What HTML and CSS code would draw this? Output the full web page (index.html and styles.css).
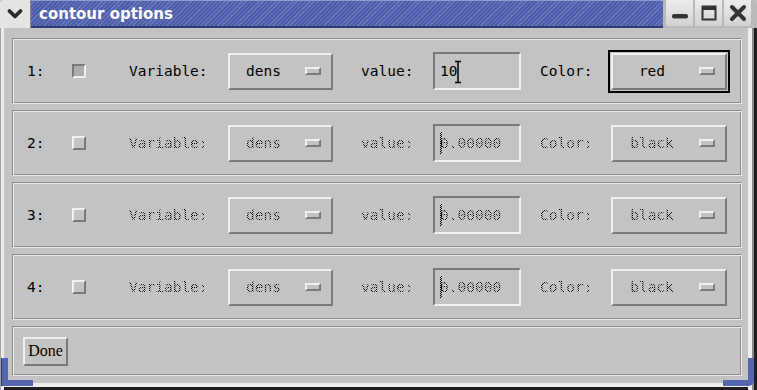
FILE: index.html
```html
<!DOCTYPE html>
<html lang="en">
<head>
    <meta charset="UTF-8">
    <title>contour options</title>
    <link rel="stylesheet" href="styles.css">
</head>
<body>
    <div class="window">
        <div class="titlebar">
            <div class="menu-btn">
                <svg width="16" height="12" viewBox="0 0 16 12"><polyline points="2.5,3 8,8.5 13.5,3" fill="none" stroke="#2b2b2b" stroke-width="3.8" stroke-linecap="round" stroke-linejoin="round"/></svg>
            </div>
            <div class="title">contour options</div>
            <div class="win-btns">
                <div class="wbtn">
                    <svg width="18" height="18" viewBox="0 0 18 18"><rect x="1" y="10" width="16" height="4.5" rx="2" fill="#333"/></svg>
                </div>
                <div class="wbtn">
                    <svg width="18" height="18" viewBox="0 0 18 18"><rect x="2.5" y="2.5" width="13" height="13" fill="none" stroke="#333" stroke-width="2"/><rect x="2" y="2" width="14" height="4" fill="#333"/></svg>
                </div>
                <div class="wbtn">
                    <svg width="18" height="18" viewBox="0 0 18 18"><path d="M3 3 L15 15 M15 3 L3 15" stroke="#333" stroke-width="4" stroke-linecap="round"/></svg>
                </div>
            </div>
        </div>

        <div class="client">
            <div class="frame row">
                <span>1:</span>
                <span><span class="check on"></span></span>
                <span>Variable:</span>
                <span class="ring"><span class="mbtn var"><span class="mtext">dens</span><span class="ind"></span></span></span>
                <span>value:</span>
                <span class="entry">10<svg class="ibeam" width="8" height="24" viewBox="0 0 8 24"><path d="M1 1.5 H7 M4 1.5 V22.5 M1 22.5 H7" stroke="#000" stroke-width="1.5" fill="none"/></svg></span>
                <span>Color:</span>
                <span class="ring focus"><span class="mbtn color"><span class="mtext">red</span><span class="ind"></span></span></span>
            </div>

            <div class="frame row">
                <span>2:</span>
                <span><span class="check"></span></span>
                <span class="dis">Variable:</span>
                <span class="ring"><span class="mbtn var"><span class="mtext dis">dens</span><span class="ind"></span></span></span>
                <span class="dis">value:</span>
                <span class="entry"><span class="icursor"></span><span class="dis">0.00000</span></span>
                <span class="dis">Color:</span>
                <span class="ring"><span class="mbtn color"><span class="mtext dis">black</span><span class="ind"></span></span></span>
            </div>

            <div class="frame row">
                <span>3:</span>
                <span><span class="check"></span></span>
                <span class="dis">Variable:</span>
                <span class="ring"><span class="mbtn var"><span class="mtext dis">dens</span><span class="ind"></span></span></span>
                <span class="dis">value:</span>
                <span class="entry"><span class="icursor"></span><span class="dis">0.00000</span></span>
                <span class="dis">Color:</span>
                <span class="ring"><span class="mbtn color"><span class="mtext dis">black</span><span class="ind"></span></span></span>
            </div>

            <div class="frame row">
                <span>4:</span>
                <span><span class="check"></span></span>
                <span class="dis">Variable:</span>
                <span class="ring"><span class="mbtn var"><span class="mtext dis">dens</span><span class="ind"></span></span></span>
                <span class="dis">value:</span>
                <span class="entry"><span class="icursor"></span><span class="dis">0.00000</span></span>
                <span class="dis">Color:</span>
                <span class="ring"><span class="mbtn color"><span class="mtext dis">black</span><span class="ind"></span></span></span>
            </div>

            <div class="frame done-row">
                <button class="done">Done</button>
            </div>
        </div>

        <div class="corner bl"></div>
        <div class="corner br"></div>
    </div>
</body>
</html>
```

FILE: styles.css
```css
body {
    margin: 0;
    padding: 0;
    background-color: #ffffff;
    font-family: "DejaVu Sans Mono", "Liberation Mono", monospace;
    font-size: 14.5px;
    color: #000;
}

.window {
    width: 757px;
    height: 390px;
    position: relative;
    display: flex;
    flex-direction: column;
    background-color: #c3c3c3;
    overflow: hidden;
}

/* title bar */
.titlebar {
    height: 28px;
    flex: none;
    display: flex;
}

.menu-btn {
    width: 30px;
    background-color: #e4e4e4;
    border-right: 1px solid #8c8c8c;
    border-top-left-radius: 4px;
    display: flex;
    align-items: center;
    justify-content: center;
}

.title {
    flex: 1;
    display: flex;
    align-items: center;
    padding-left: 8px;
    background: repeating-linear-gradient(135deg, #4e5ea8 0 2px, #6878bf 2px 3px);
    border-top: 1px solid #8e9ad2;
    border-bottom: 2px solid #2e3a7a;
    color: #ffffff;
    font-family: "DejaVu Sans", sans-serif;
    font-weight: bold;
    font-size: 15px;
}

.win-btns {
    width: 94px;
    box-sizing: border-box;
    display: flex;
    gap: 2px;
    padding: 0 6px 2px 3px;
    background-color: #b9b9b9;
    border-top-right-radius: 6px;
}

.wbtn {
    width: 27px;
    display: flex;
    align-items: center;
    justify-content: center;
    background: linear-gradient(#ececec, #d2d2d2);
}

/* client area */
.client {
    flex: 1;
    display: flex;
    flex-direction: column;
    gap: 6px;
    padding: 10px 15px 0 12px;
    box-shadow:
        inset 1px 0 0 #a0a0a0,
        inset 4px 0 0 #ececec,
        inset -3px 0 0 #1e1e1e,
        inset -5px 0 0 #8a8a8a,
        inset -9px 0 0 #eeeeee,
        inset 0 -3px 0 #1e1e1e,
        inset 0 -7px 0 #eeeeee;
}

.frame {
    box-sizing: border-box;
    border: 1px solid;
    border-color: #8a8a8a #ebebeb #ebebeb #8a8a8a;
    box-shadow: inset 1px 1px 0 #ebebeb, inset -1px -1px 0 #8a8a8a;
}

.row {
    height: 66px;
    display: grid;
    grid-template-columns: 45px 57px 99px 133px 72px 107px 68px 122px;
    align-items: center;
    padding-left: 14px;
}

.done-row {
    height: 50px;
    display: flex;
    align-items: center;
    padding-left: 10px;
}

/* disabled text is stippled like Tk does it */
.dis {
    background: repeating-conic-gradient(#000 0 25%, transparent 0 50%) 0 0 / 2px 2px;
    -webkit-background-clip: text;
    background-clip: text;
    color: transparent;
}

.check {
    display: block;
    width: 14px;
    height: 14px;
    box-sizing: border-box;
    border: 2px solid;
    border-color: #f0f0f0 #7a7a7a #7a7a7a #f0f0f0;
}

.check.on {
    border-color: #7a7a7a #f0f0f0 #f0f0f0 #7a7a7a;
    background-color: #acacac;
}

.ring {
    display: inline-block;
    border: 2px solid transparent;
    padding: 1px;
    justify-self: start;
    margin-left: -3px;
}

.ring.focus {
    border-color: #000;
}

.mbtn {
    height: 37px;
    box-sizing: border-box;
    display: flex;
    align-items: center;
    padding-right: 10px;
    border: 2px solid;
    border-color: #f0f0f0 #7a7a7a #7a7a7a #f0f0f0;
}

.mbtn.var {
    width: 105px;
}

.mbtn.color {
    width: 116px;
}

.ring.focus,
.row .ring:last-child {
    margin-left: 0;
}

.mtext {
    flex: 1;
    text-align: center;
    padding-right: 8px;
}

.ind {
    width: 16px;
    height: 8px;
    box-sizing: border-box;
    border: 2px solid;
    border-color: #f0f0f0 #7a7a7a #7a7a7a #f0f0f0;
}

.entry {
    position: relative;
    width: 88px;
    height: 38px;
    box-sizing: border-box;
    display: flex;
    align-items: center;
    padding-left: 5px;
    border: 2px solid;
    border-color: #7a7a7a #f0f0f0 #f0f0f0 #7a7a7a;
}

.ibeam {
    position: absolute;
    left: 19px;
    top: 6px;
}

.icursor {
    position: absolute;
    left: 5px;
    top: 6px;
    width: 2px;
    height: 22px;
    background: repeating-conic-gradient(#000 0 25%, transparent 0 50%) 0 0 / 2px 2px;
}

.done {
    width: 45px;
    height: 29px;
    padding: 0;
    box-sizing: border-box;
    background-color: #c3c3c3;
    border: 2px solid;
    border-color: #f0f0f0 #7a7a7a #7a7a7a #f0f0f0;
    font-family: "Liberation Serif", serif;
    font-size: 16px;
    color: #000;
}

/* blue resize corners */
.corner {
    position: absolute;
    bottom: 4px;
    width: 31px;
    height: 28px;
    box-sizing: border-box;
    border: 0 solid #5565ae;
}

.corner.bl {
    left: 2px;
    border-left-width: 6px;
    border-bottom-width: 6px;
    box-shadow: -1px 0 0 #2e3a7a;
}

.corner.br {
    right: 3px;
    border-right-width: 6px;
    border-bottom-width: 6px;
    border-bottom-right-radius: 6px;
}
```
